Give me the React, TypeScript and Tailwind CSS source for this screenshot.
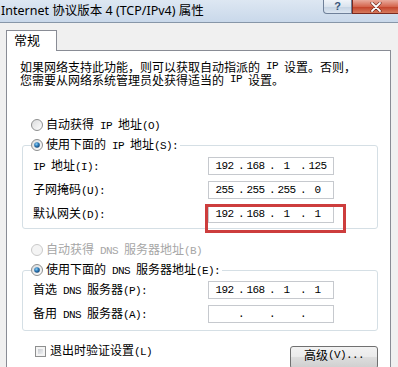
import React from "react";

function T({ s }: { s: string }) {
  const parts = s.match(/[\x00-\x7f]+|[^\x00-\x7f]+/g) || [];
  return (
    <>
      {parts.map((p, i) =>
        /^[\x00-\x7f]/.test(p) ? (
          <span
            key={i}
            className="font-['Liberation_Mono',monospace] text-[11px] tracking-[-0.6px] whitespace-pre"
          >
            {p}
          </span>
        ) : (
          <span key={i}>{p}</span>
        )
      )}
    </>
  );
}

function RadioIcon({ checked, disabled }: { checked?: boolean; disabled?: boolean }) {
  return (
    <svg width="12" height="12" viewBox="0 0 12 12" className="shrink-0">
      <defs>
        <linearGradient id="rbg" x1="0" y1="0" x2="1" y2="1">
          <stop offset="0" stopColor="#d9dadb" />
          <stop offset="1" stopColor="#ffffff" />
        </linearGradient>
        <radialGradient id="rdot" cx="0.4" cy="0.35" r="0.7">
          <stop offset="0" stopColor="#8fd0f5" />
          <stop offset="0.5" stopColor="#2a7ab8" />
          <stop offset="1" stopColor="#153e6a" />
        </radialGradient>
      </defs>
      <circle
        cx="6"
        cy="6"
        r="5.5"
        fill={disabled ? "#f4f4f4" : "url(#rbg)"}
        stroke={disabled ? "#c9c9c9" : "#8e8f8f"}
      />
      {checked && <circle cx="6" cy="6" r="2.8" fill="url(#rdot)" />}
    </svg>
  );
}

function RadioRow({
  label,
  checked,
  disabled,
  className = "",
}: {
  label: string;
  checked?: boolean;
  disabled?: boolean;
  className?: string;
}) {
  return (
    <div className={`flex items-center h-[14px] gap-[3px] leading-[14px] ${className}`}>
      <RadioIcon checked={checked} disabled={disabled} />
      <span className={`whitespace-nowrap ${disabled ? "text-[#a6a6a6]" : "text-black"}`}>
        <T s={label} />
      </span>
    </div>
  );
}

function IpBox({ parts, red }: { parts: string[]; red?: boolean }) {
  return (
    <div className="relative w-[126px] h-[18px] mr-[43px] border border-[#c6c9ce] bg-white flex items-center pl-[2px] font-['Liberation_Mono',monospace] text-[11px] tracking-[-0.6px] leading-none">
      {parts.map((p, i) => (
        <React.Fragment key={i}>
          <span className="w-[27px] text-center">{p}</span>
          {i < 3 && <span className="w-[4px] text-center">.</span>}
        </React.Fragment>
      ))}
      {red && (
        <div className="absolute left-[-4px] top-[-2px] w-[141px] h-[29px] border-[3px] border-[#cd3d3d]" />
      )}
    </div>
  );
}

function FieldRow({ label, parts, red }: { label: string; parts: string[]; red?: boolean }) {
  return (
    <div className="flex items-center h-[18px]">
      <span className="flex-1 pl-[10px] whitespace-nowrap leading-[14px]">
        <T s={label} />
      </span>
      <IpBox parts={parts} red={red} />
    </div>
  );
}

export default function App() {
  return (
    <div className="w-[398px] h-[367px] overflow-hidden bg-[#f0f0f0] font-['Noto_Sans_CJK_SC',sans-serif] text-[12px] text-black">
      {/* Title bar */}
      <div className="h-[23px] flex items-start border-b border-[#8796a8] bg-[linear-gradient(180deg,#dde7f2,#c9d8ea)]">
        <div className="flex-1 h-[22px] flex items-center pl-[1px] text-[12.5px] font-['Noto_Sans','Noto_Sans_CJK_SC',sans-serif] text-black leading-none whitespace-nowrap">
          Internet 协议版本 4 (TCP/IPv4) 属性
        </div>
        <div className="w-[29px] h-[14px] rounded-bl-[4px] border border-t-0 border-[#6f8099] bg-[linear-gradient(180deg,#f0f4f9,#dbe4ee_50%,#c4d2e2_51%,#dce6f1)] flex items-center justify-center text-[#37557a] text-[11px] font-bold font-['Liberation_Sans',sans-serif] leading-none">
          ?
        </div>
        <div className="w-[46px] h-[14px] border-b border-l border-[#7b2a20] bg-[linear-gradient(180deg,#e9ab9d,#d5674f_50%,#c23f27_51%,#d67a5d)] flex items-center justify-center">
          <svg width="12" height="10" viewBox="0 0 12 10">
            <path d="M2 1 L10 9 M10 1 L2 9" stroke="#5a1a12" strokeWidth="3" strokeLinecap="round" />
            <path d="M2 1 L10 9 M10 1 L2 9" stroke="#ffffff" strokeWidth="1.8" strokeLinecap="round" />
          </svg>
        </div>
      </div>

      {/* Tab */}
      <div className="relative z-10 mt-[7px] ml-[6px] w-[51px] h-[21px] -mb-px border border-b-0 border-[#898c95] bg-white pl-[7px] pt-[2px] leading-[14px] text-[13px]">
        常规
      </div>

      {/* Panel */}
      <div className="ml-[6px] w-[385px] h-[330px] border border-[#898c95] bg-white">
        <div className="mt-[9px] pl-[13px] flex flex-col">
          <div className="h-[13px] leading-[13px] flex items-center whitespace-nowrap">
            <T s="如果网络支持此功能，则可以获取自动指派的 IP 设置。否则，" />
          </div>
          <div className="h-[13px] leading-[13px] flex items-center whitespace-nowrap">
            <T s="您需要从网络系统管理员处获得适当的 IP 设置。" />
          </div>
        </div>

        <RadioRow className="mt-[32px] ml-[24px]" label="自动获得 IP 地址(O)" />

        <fieldset className="ml-[15px] mt-[6px] w-[356px] border border-[#d5dfe5] rounded-[3px] p-0 pb-[5px]">
          <legend className="ml-[8px] pr-[2px]">
            <RadioRow label="使用下面的 IP 地址(S):" checked />
          </legend>
          <div className="mt-[5px] flex flex-col gap-[6px]">
            <FieldRow label="IP 地址(I):" parts={["192", "168", "1", "125"]} />
            <FieldRow label="子网掩码(U):" parts={["255", "255", "255", "0"]} />
            <FieldRow label="默认网关(D):" parts={["192", "168", "1", "1"]} red />
          </div>
        </fieldset>

        <RadioRow className="mt-[14px] ml-[24px]" label="自动获得 DNS 服务器地址(B)" disabled />

        <fieldset className="ml-[15px] mt-[6px] w-[356px] border border-[#d5dfe5] rounded-[3px] p-0 pb-[7px]">
          <legend className="ml-[8px] pr-[2px]">
            <RadioRow label="使用下面的 DNS 服务器地址(E):" checked />
          </legend>
          <div className="mt-[4px] flex flex-col gap-[6px]">
            <FieldRow label="首选 DNS 服务器(P):" parts={["192", "168", "1", "1"]} />
            <FieldRow label="备用 DNS 服务器(A):" parts={["", "", "", ""]} />
          </div>
        </fieldset>

        <div className="flex items-start mt-[13px]">
          <div className="ml-[28px] flex items-center h-[14px] gap-[4px] leading-[14px]">
            <div className="w-[11px] h-[11px] border border-[#8e8f8f] bg-[#f4f4f4] p-[2px]">
              <div className="w-full h-full bg-[linear-gradient(135deg,#c9ccd1,#eef0f2)]" />
            </div>
            <span className="whitespace-nowrap">
              <T s="退出时验证设置(L)" />
            </span>
          </div>
          <div className="ml-auto mr-[12px] mt-[2px] w-[88px] h-[23px] rounded-[3px] border border-[#707070] bg-[linear-gradient(180deg,#f2f2f2,#ebebeb_45%,#dddddd_50%,#cfcfcf)] flex items-start justify-center pt-[1px] leading-[14px] whitespace-nowrap">
            <T s="高级(V)..." />
          </div>
        </div>
      </div>
    </div>
  );
}
